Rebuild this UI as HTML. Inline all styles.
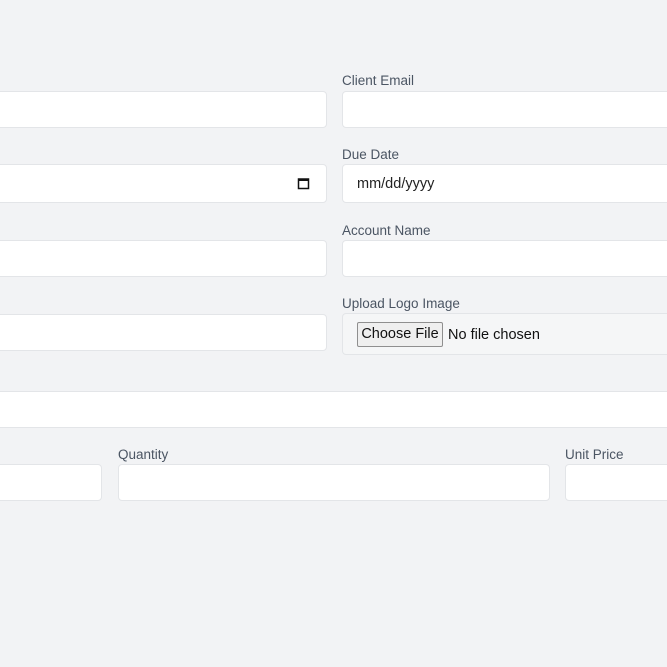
<!DOCTYPE html>
<html><head><style>
body{margin:0;width:667px;height:667px;background:#f2f3f5;font-family:"Liberation Sans",sans-serif;position:relative;overflow:hidden}
.i{position:absolute;background:#fff;border:1px solid #e3e5e8;border-radius:4px;box-sizing:border-box}
.l{position:absolute;font-size:13.5px;color:#4b5563}
.t{position:absolute;font-size:14.5px;color:#222}
</style></head><body>
<div class="l" style="left:342px;top:73px">Client Email</div>
<div class="i" style="left:-5px;top:91px;width:332px;height:37px"></div>
<div class="i" style="left:342px;top:91px;width:340px;height:37px"></div>
<div class="l" style="left:342px;top:147px">Due Date</div>
<div class="i" style="left:-5px;top:164px;width:332px;height:39px"></div>
<svg style="position:absolute;left:297px;top:177px" width="13" height="13" viewBox="0 0 13 13"><rect x="1.5" y="2" width="10" height="9.5" fill="none" stroke="#111" stroke-width="1.5"/><rect x="1.5" y="2" width="10" height="2" fill="#111"/></svg>
<div class="i" style="left:342px;top:164px;width:340px;height:39px"></div>
<div class="t" style="left:357px;top:176px">mm/dd/yyyy</div>
<div class="l" style="left:342px;top:223px">Account Name</div>
<div class="i" style="left:-5px;top:240px;width:332px;height:37px"></div>
<div class="i" style="left:342px;top:240px;width:340px;height:37px"></div>
<div class="l" style="left:342px;top:296px">Upload Logo Image</div>
<div class="i" style="left:-5px;top:314px;width:332px;height:37px"></div>
<div class="i" style="left:342px;top:313px;width:340px;height:42px;background:#f5f6f7"></div>
<div style="position:absolute;left:357px;top:322px;width:86px;height:25px;box-sizing:border-box;border:1px solid #8f8f8f;border-radius:2px;background:#efefef;font-size:14.5px;color:#111;line-height:23px;text-align:center">Choose File</div>
<div class="t" style="left:448px;top:327px;color:#111">No file chosen</div>
<div class="i" style="left:-5px;top:391px;width:680px;height:37px"></div>
<div class="l" style="left:118px;top:447px">Quantity</div>
<div class="l" style="left:565px;top:447px">Unit Price</div>
<div class="i" style="left:-5px;top:464px;width:107px;height:37px"></div>
<div class="i" style="left:118px;top:464px;width:432px;height:37px"></div>
<div class="i" style="left:565px;top:464px;width:120px;height:37px"></div>
</body></html>
